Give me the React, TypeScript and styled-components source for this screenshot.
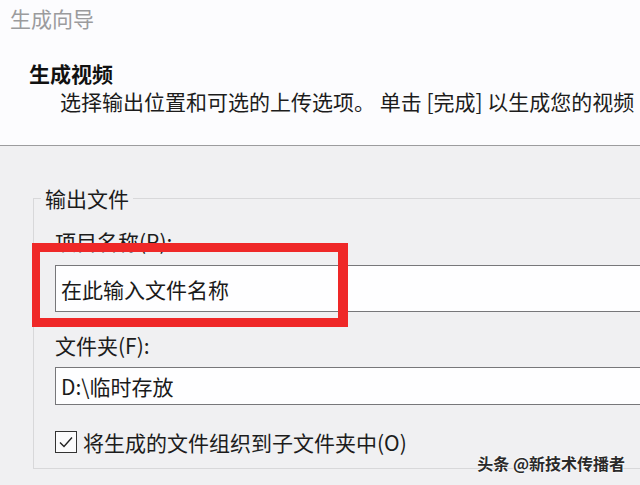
import React from "react";
import styled, { createGlobalStyle } from "styled-components";

const Global = createGlobalStyle`
  html, body {
    margin: 0;
    padding: 0;
    width: 640px;
    height: 485px;
    overflow: hidden;
    background: #f4f4f6;
    font-family: "Noto Sans CJK SC", "Noto Sans", "Liberation Sans", sans-serif;
    color: #1c1c1c;
  }
  * { box-sizing: border-box; }
`;

const Page = styled.div`
  position: relative;
  width: 640px;
  height: 485px;
  overflow: hidden;
  display: flex;
  flex-direction: column;
`;

const Header = styled.header`
  height: 146px;
  background: #fcfcfe;
  border-bottom: 1px solid #9c9c9e;
  display: flex;
  flex-direction: column;
  padding: 6px 0 0 10px;
  flex-shrink: 0;
`;

const WizardTitle = styled.div`
  font-size: 21px;
  line-height: 24px;
  color: #9b9b9d;
`;

const StepTitle = styled.div`
  margin: 31px 0 0 19px;
  font-size: 21px;
  line-height: 24px;
  font-weight: 700;
  color: #111;
`;

const StepDesc = styled.div`
  margin: 4px 0 0 50px;
  font-size: 21px;
  line-height: 24px;
  white-space: nowrap;
  color: #1c1c1c;
`;

const Body = styled.main`
  flex: 1;
  background: #f0f0f2;
  padding: 41px 0 0 33px;
`;

const GroupBox = styled.fieldset`
  position: relative;
  width: 720px;
  margin: 0;
  border: 1px solid #d8d8da;
  border-right: none;
  padding: 20px 0 14px 21px;
  display: flex;
  flex-direction: column;
`;

const Legend = styled.legend`
  margin-left: -14px;
  padding: 0 4px;
  font-size: 21px;
  line-height: 22px;
  color: #1c1c1c;
`;

const FieldLabel = styled.div<{ $gap?: number }>`
  margin-top: ${(p) => p.$gap ?? 0}px;
  font-size: 21px;
  line-height: 24px;
  color: #1c1c1c;
`;

const TextBox = styled.div<{ $h: number; $gap: number }>`
  margin-top: ${(p) => p.$gap}px;
  height: ${(p) => p.$h}px;
  background: #fefeff;
  border: 1px solid #77777a;
  border-right: none;
  display: flex;
  align-items: center;
  padding-left: 5px;
  font-size: 21px;
  line-height: 24px;
  color: #1a1a1a;
`;

const CheckRow = styled.label`
  margin-top: 25px;
  display: flex;
  align-items: center;
  gap: 6px;
  height: 24px;
  font-size: 21px;
  line-height: 24px;
  color: #1c1c1c;
`;

const CheckBox = styled.span`
  width: 22px;
  height: 22px;
  border: 1px solid #333;
  background: #fbfbfc;
  display: flex;
  align-items: center;
  justify-content: center;
`;

const Highlight = styled.div`
  position: absolute;
  left: -2px;
  top: 34px;
  width: 316px;
  height: 84px;
  border-style: solid;
  border-color: #ef2828;
  border-width: 9px 10px 9px 8px;
  pointer-events: none;
`;

const Watermark = styled.div`
  position: absolute;
  right: 15px;
  bottom: 12px;
  font-size: 16px;
  line-height: 20px;
  font-weight: 700;
  color: #2a2a2a;
  text-shadow: 0 0 2px #fff, 0 0 2px #fff;
`;

export default function App() {
  return (
    <>
      <Global />
      <Page>
        <Header>
          <WizardTitle>生成向导</WizardTitle>
          <StepTitle>生成视频</StepTitle>
          <StepDesc>选择输出位置和可选的上传选项。 单击 [完成] 以生成您的视频</StepDesc>
        </Header>
        <Body>
          <GroupBox>
            <Legend>输出文件</Legend>
            <FieldLabel>项目名称(P):</FieldLabel>
            <TextBox $h={47} $gap={12}>在此输入文件名称</TextBox>
            <FieldLabel $gap={21}>文件夹(F):</FieldLabel>
            <TextBox $h={38} $gap={10}>D:\临时存放</TextBox>
            <CheckRow>
              <CheckBox>
                <svg width="16" height="14" viewBox="0 0 16 14">
                  <path d="M2 7.5 L6 11.5 L14 2.5" fill="none" stroke="#222" strokeWidth="1.4" />
                </svg>
              </CheckBox>
              将生成的文件组织到子文件夹中(O)
            </CheckRow>
            <Highlight />
          </GroupBox>
        </Body>
        <Watermark>头条 @新技术传播者</Watermark>
      </Page>
    </>
  );
}
